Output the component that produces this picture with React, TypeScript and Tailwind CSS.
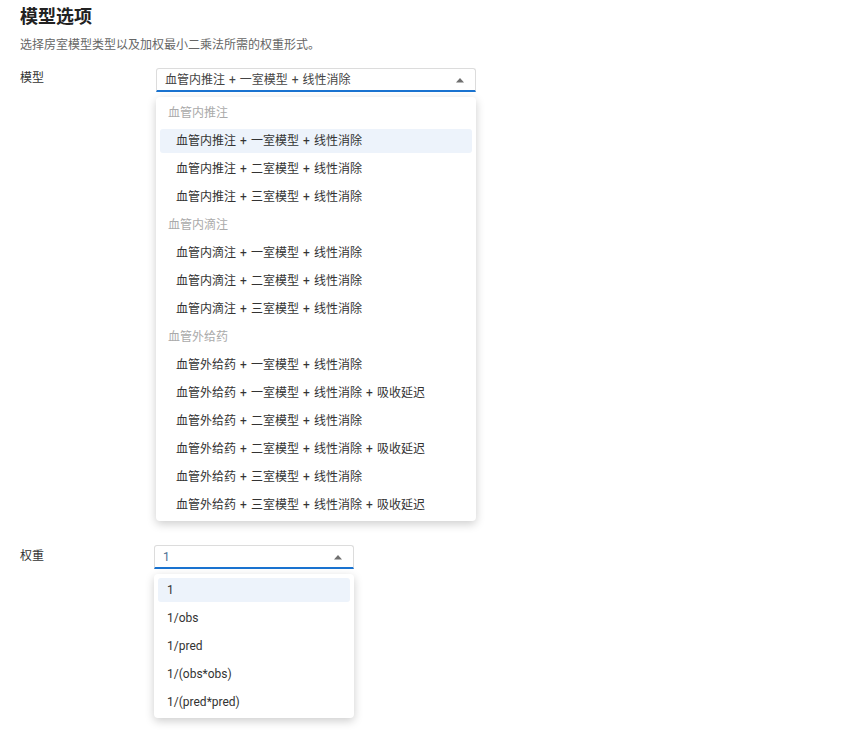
import React from 'react';

const groups = [
  {
    title: '血管内推注',
    items: ['血管内推注 + 一室模型 + 线性消除', '血管内推注 + 二室模型 + 线性消除', '血管内推注 + 三室模型 + 线性消除'],
  },
  {
    title: '血管内滴注',
    items: ['血管内滴注 + 一室模型 + 线性消除', '血管内滴注 + 二室模型 + 线性消除', '血管内滴注 + 三室模型 + 线性消除'],
  },
  {
    title: '血管外给药',
    items: [
      '血管外给药 + 一室模型 + 线性消除',
      '血管外给药 + 一室模型 + 线性消除 + 吸收延迟',
      '血管外给药 + 二室模型 + 线性消除',
      '血管外给药 + 二室模型 + 线性消除 + 吸收延迟',
      '血管外给药 + 三室模型 + 线性消除',
      '血管外给药 + 三室模型 + 线性消除 + 吸收延迟',
    ],
  },
];

const weights = ['1', '1/obs', '1/pred', '1/(obs*obs)', '1/(pred*pred)'];

function Arrow() {
  return (
    <svg width="10" height="6" viewBox="0 0 10 6" className="shrink-0">
      <path d="M1 5.5 L5 1 L9 5.5 Z" fill="#6f6f6f" />
    </svg>
  );
}

function SelectBox({ value, width, valueClass }: { value: string; width: string; valueClass: string }) {
  return (
    <div
      className={`${width} h-6 flex items-center justify-between pl-2 pr-[10px] bg-white border border-[#dcdcdc] border-b-2 border-b-[#1a73d0] rounded-t-[3px]`}
    >
      <span className={`text-[12px] leading-4 [word-spacing:1px] ${valueClass}`}>{value}</span>
      <Arrow />
    </div>
  );
}

export default function App() {
  return (
    <div
      className="min-h-screen bg-white pl-5 pt-[5px] text-[#333]"
      style={{ fontFamily: 'Roboto, "Noto Sans CJK SC", sans-serif' }}
    >
      <h1 className="text-[18px] leading-6 font-bold text-[#222]">模型选项</h1>
      <p className="mt-2 text-[12px] leading-4 text-[#666]">选择房室模型类型以及加权最小二乘法所需的权重形式。</p>

      <div className="mt-[15px] flex">
        <div className="w-[136px] text-[12px] leading-5 text-[#333]">模型</div>
        <div className="flex flex-col">
          <SelectBox value="血管内推注 + 一室模型 + 线性消除" width="w-[320px]" valueClass="text-[#444]" />
          <div className="mt-[5px] w-[320px] bg-white rounded-[4px] px-1 pt-[2px] pb-[2px] shadow-[0_3px_10px_rgba(0,0,0,0.2)]">
            {groups.map((g) => (
              <div key={g.title}>
                <div className="h-7 flex items-center pl-2 text-[12px] text-[#aaa]">{g.title}</div>
                {g.items.map((item, i) => (
                  <div key={item} className="h-7 py-[2px]">
                    <div
                      className={`h-6 flex items-center pl-4 rounded-[3px] text-[12px] text-[#333] [word-spacing:1.1px] ${
                        g.title === '血管内推注' && i === 0 ? 'bg-[#edf3fb]' : ''
                      }`}
                    >
                      {item}
                    </div>
                  </div>
                ))}
              </div>
            ))}
          </div>
        </div>
      </div>

      <div className="mt-6 flex">
        <div className="w-[134px] pt-[1px] text-[12px] leading-5 text-[#333]">权重</div>
        <div className="flex flex-col">
          <SelectBox value="1" width="w-[200px]" valueClass="text-[#4d6f93]" />
          <div className="mt-[5px] w-[200px] bg-white rounded-[4px] px-1 pt-[2px] pb-[2px] shadow-[0_3px_10px_rgba(0,0,0,0.2)]">
            {weights.map((w, i) => (
              <div key={w} className="h-7 py-[2px]">
                <div
                  className={`h-6 flex items-center pl-[9px] rounded-[3px] text-[12px] text-[#333] ${
                    i === 0 ? 'bg-[#edf3fb]' : ''
                  }`}
                >
                  {w}
                </div>
              </div>
            ))}
          </div>
        </div>
      </div>
    </div>
  );
}
